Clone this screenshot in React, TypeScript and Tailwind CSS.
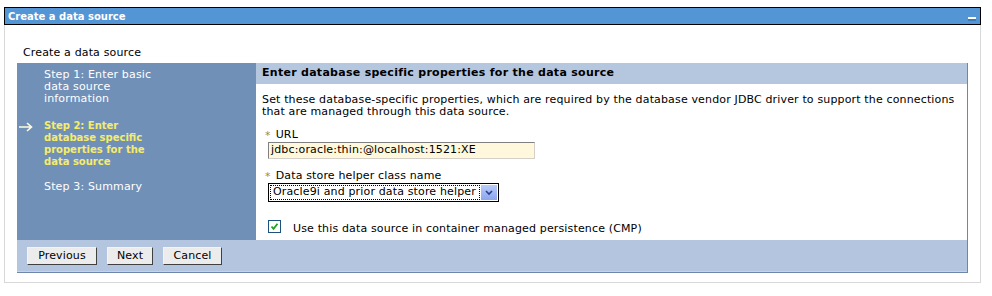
import React from 'react';

// Wizard steps shown in the left column
const steps = [
  { label: 'Step 1: Enter basic data source information', current: false, gap: 'mb-[15px]' },
  { label: 'Step 2: Enter database specific properties for the data source', current: true, gap: 'mb-[13px]' },
  { label: 'Step 3: Summary', current: false, gap: '' },
];

function Asterisk() {
  return <span className="mr-[5px] inline-block text-[11px] leading-none text-[#b08a10]">*</span>;
}

function Button({ label, width }: { label: string; width: string }) {
  return (
    <button
      className={`${width} h-[18px] border border-t-[#f4f4f4] border-l-[#f4f4f4] border-r-[#404040] border-b-[#404040] bg-[#ececec] text-[11px] leading-none tracking-[0.15px] text-black`}
    >
      {label}
    </button>
  );
}

export default function App() {
  return (
    <div
      className="h-[296px] w-[992px] overflow-hidden bg-white pt-[7px] pl-[4px] text-[11px] tracking-[0.15px] text-black"
      style={{ fontFamily: '"DejaVu Sans", Verdana, sans-serif' }}
    >
      {/* Portlet title bar */}
      <div className="flex h-[18px] w-[977px] items-center justify-between border border-black bg-[#5395d5] pl-[3px] pr-[4px]">
        <span className="text-[10px] font-bold tracking-normal text-white">Create a data source</span>
        <span className="mt-[6px] block h-[4px] w-[8px] border-t-2 border-white bg-[#3a7ab8]" />
      </div>

      {/* Portlet body */}
      <div className="h-[258px] w-[977px] border-r border-b border-l border-[#d8d8d8] px-[12px] pt-[22px]">
        <div className="mb-[4px] pl-[6px] leading-[12px]">Create a data source</div>

        <div className="w-[951px] border-r border-b border-[#6d86ac]">
          <div className="flex h-[177px]">
            {/* Steps column */}
            <div className="w-[239px] bg-[#7190b8] pt-[6px]">
              {steps.map((step) => (
                <div key={step.label} className={`${step.gap} flex leading-[12px]`}>
                  <div className="flex w-[27px] justify-end pr-[11px] pt-[2px]">
                    {step.current ? (
                      <svg width="15" height="10" viewBox="0 0 15 10">
                        <path d="M1 5 H13 M9 1 L13.5 5 L9 9" stroke="#fffbe0" strokeWidth="1.6" fill="none" />
                      </svg>
                    ) : null}
                  </div>
                  <div
                    className={
                      step.current
                        ? 'w-[118px] text-[10px] font-bold tracking-normal text-[#f6ec6a]'
                        : 'w-[118px] text-white'
                    }
                  >
                    {step.label}
                  </div>
                </div>
              ))}
            </div>

            {/* Form column */}
            <div className="flex-1 bg-white">
              <div className="flex h-[21px] items-center bg-[#b5c6df] pl-[6px] font-bold tracking-[0.28px]">
                Enter database specific properties for the data source
              </div>
              <div className="px-[6px] pt-[10px]">
                <p className="leading-[12px]">
                  Set these database-specific properties, which are required by the database vendor JDBC driver
                  to support the connections that are managed through this data source.
                </p>

                <div className="mt-[11px] ml-[3px] flex h-[12px] items-center">
                  <Asterisk />
                  URL
                </div>
                <div className="mt-[1px] ml-[6px] flex h-[17px] w-[267px] items-center border border-t-[#808080] border-l-[#808080] border-r-[#d4d0c8] border-b-[#d4d0c8] bg-[#fff8dc] pl-[2px]">
                  jdbc:oracle:thin:@localhost:1521:XE
                </div>

                <div className="mt-[11px] ml-[3px] flex h-[12px] items-center">
                  <Asterisk />
                  Data store helper class name
                </div>
                <div className="mt-[1px] ml-[6px] flex h-[19px] w-[231px] items-center border border-black bg-white">
                  <div className="ml-[1px] flex h-[15px] flex-1 items-center overflow-hidden whitespace-nowrap border border-dotted border-black pl-[2px]">
                    Oracle9i and prior data store helper
                  </div>
                  <div className="mx-[1px] flex h-[15px] w-[16px] items-center justify-center bg-gradient-to-b from-[#b9cbf7] to-[#8aa6ee]">
                    <svg width="8" height="6" viewBox="0 0 8 6">
                      <path d="M1 1 L4 4 L7 1" stroke="#2a3f8c" strokeWidth="1.6" fill="none" />
                    </svg>
                  </div>
                </div>

                <div className="mt-[14px] ml-[6px] flex items-center">
                  <div className="flex h-[13px] w-[13px] items-center justify-center border border-[#1c5180] bg-white">
                    <svg width="9" height="9" viewBox="0 0 9 9">
                      <path d="M1.5 4.5 L3.5 6.8 L7.5 1.8" stroke="#21a121" strokeWidth="1.8" fill="none" />
                    </svg>
                  </div>
                  <span className="ml-[12px] mt-[5px]">Use this data source in container managed persistence (CMP)</span>
                </div>
              </div>
            </div>
          </div>

          {/* Wizard buttons */}
          <div className="flex h-[32px] items-center gap-[10px] border-b border-[#c7d3e6] bg-[#b4c5e0] pl-[10px]">
            <Button label="Previous" width="w-[70px]" />
            <Button label="Next" width="w-[46px]" />
            <Button label="Cancel" width="w-[59px]" />
          </div>
        </div>
      </div>
    </div>
  );
}
